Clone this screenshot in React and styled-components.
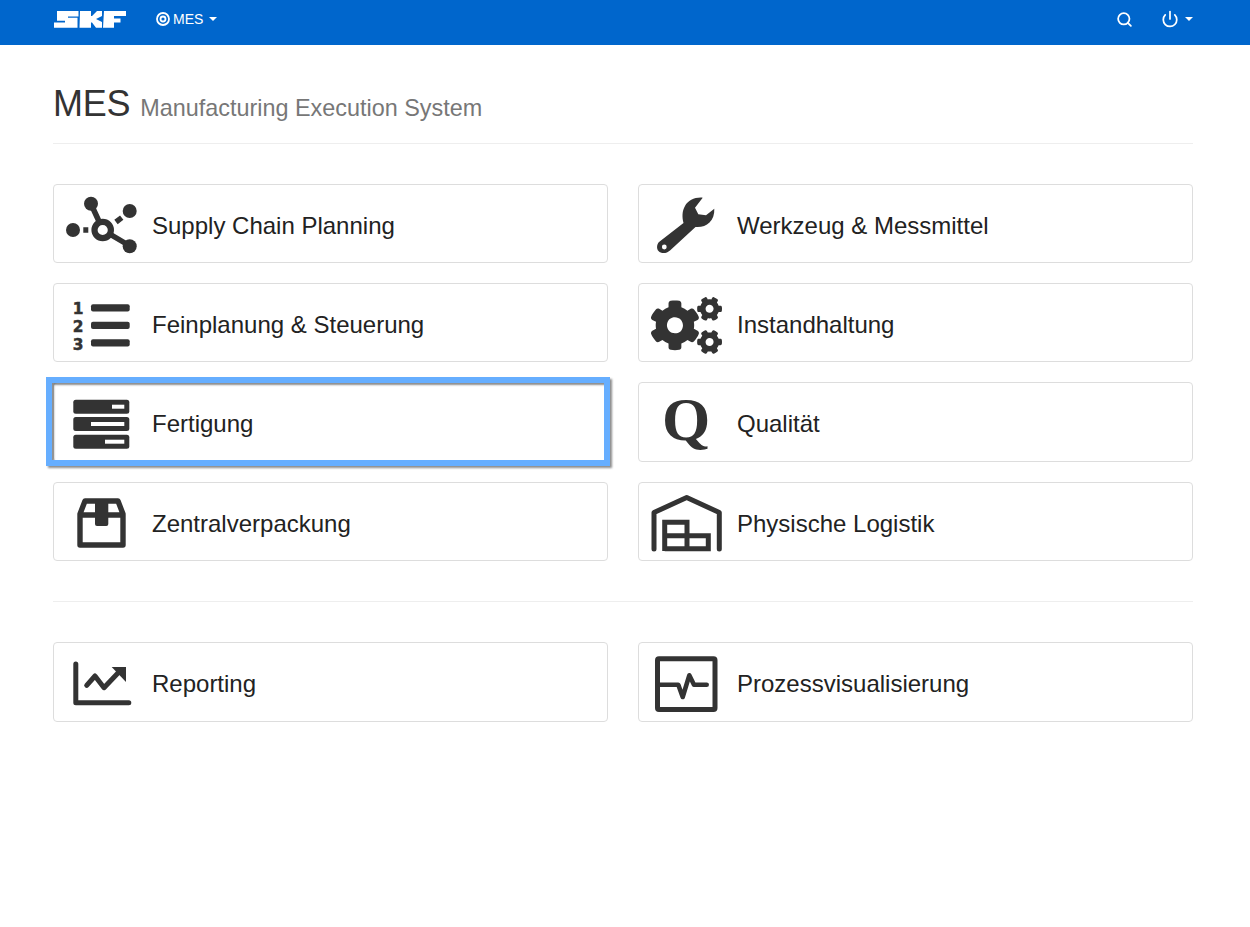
import styled, { createGlobalStyle } from "styled-components";
import { FaCogs } from "react-icons/fa";
import { Power, Search } from "lucide-react";

const GlobalStyle = createGlobalStyle`
  body {
    margin: 0;
    background: #fff;
    font-family: "Liberation Sans", Arial, sans-serif;
    color: #222;
  }
`;

const SkfLogo = () => (
  <svg width="72" height="17" viewBox="0 0 72 17" fill="#fff">
    <path d="M3 0h21.5v5.5H14v1.2h9.5v10H0v-5.2h11V9.8H3z" />
    <path d="M26 0h11v5h1l5-5h5v5l-6 3 6 3v5.7h-6L38 11.5h-1v5.200H25.5z" />
    <path d="M50 0h22v5H60v2.4h6.5v4.2H60v5.1H49z" />
  </svg>
);

const TargetIcon = () => (
  <svg width="14" height="14" viewBox="0 0 14 14" fill="none" stroke="#fff">
    <circle cx="7" cy="7" r="6" strokeWidth="1.8" />
    <circle cx="7" cy="7" r="2.5" strokeWidth="1.8" />
  </svg>
);

const Icon = styled.svg.attrs({ width: 72, height: 72, viewBox: "0 0 72 72" })`
  display: block;
  fill: #333;
  stroke: #333;
  stroke-width: 0;
`;

const NetworkIcon = () => (
  <Icon>
    <g strokeWidth="5.5">
      <path d="M26 17l12 26 27 16M18.3 43h5M51 35l5.7-4.4" fill="none" />
      <circle cx="37.7" cy="43" r="8.2" fill="#fff" strokeWidth="6.2" />
    </g>
    <circle cx="26" cy="16.7" r="7" />
    <circle cx="64.7" cy="24" r="7" />
    <circle cx="64.7" cy="59.3" r="7" />
    <circle cx="8" cy="43" r="7" />
  </Icon>
);

const ListIcon = () => (
  <Icon>
    <rect x="26" y="17.3" width="38.7" height="7.2" rx="2" />
    <rect x="26" y="34.7" width="38.7" height="7.2" rx="2" />
    <rect x="26" y="52.2" width="38.7" height="7.2" rx="2" />
    <g
      fontFamily="'DejaVu Sans', sans-serif"
      fontWeight="700"
      fontSize="15.4"
      textAnchor="middle"
      stroke="#333"
      strokeWidth="0.5"
    >
      <text x="13" y="26.5">1</text>
      <text x="13" y="44.5">2</text>
      <text x="13" y="62.5">3</text>
    </g>
  </Icon>
);

const ServerIcon = () => (
  <Icon>
    <rect x="8.3" y="13.7" width="56" height="14" rx="2.5" />
    <rect x="8.3" y="31" width="56" height="14" rx="2.5" />
    <rect x="8.3" y="48.7" width="56" height="14" rx="2.5" />
    <rect x="47" y="18.7" width="12.3" height="4" fill="#fff" />
    <rect x="26" y="36" width="33.3" height="4" fill="#fff" />
    <rect x="40" y="53.7" width="19.3" height="4" fill="#fff" />
  </Icon>
);

const BoxIcon = () => (
  <Icon>
    <path
      d="M20 16h33L58 29v31H15V29zM15 30h43"
      fill="none"
      strokeWidth="5.4"
      strokeLinejoin="round"
    />
    <rect x="30" y="14" width="13.3" height="27" rx="2" />
  </Icon>
);

const WarehouseIcon = () => (
  <Icon>
    <path
      d="M4 64V27.5l32.7-15 32.6 15V64"
      fill="none"
      strokeWidth="5"
      strokeLinecap="round"
      strokeLinejoin="round"
    />
    <path
      d="M14.7 66V37.3H37v26.4M14.7 50.7h43.6v13H14.7"
      fill="none"
      strokeWidth="5"
    />
  </Icon>
);

const WrenchIcon = () => (
  <Icon>
    <path
      fillRule="evenodd"
      d="M52.7 10.7C45 10 38 13.5 35 19c-3 5-3 11-1.5 17L9 55c-2.5 2.5-2.5 7-.5 9 2.5 2.800 8 2.800 11.5-.5L45.500 40c5.500.5 10.500-1 14-4.500 3.500-3.500 5-8 4.800-13.800L56 28.300l-7.700-1-3.300-6.600zM14.300 57.600a2.400 2.400 0 1 0 0 4.800 2.400 2.400 0 1 0 0-4.800z"
    />
  </Icon>
);

const CogsIcon = styled(FaCogs).attrs({ size: 71, color: "#333" })`
  display: block;
  margin-top: 5px;
`;

const QIcon = () => (
  <Icon>
    <text
      x="36"
      y="54"
      fontFamily="'Liberation Serif', serif"
      fontWeight="700"
      fontSize="62"
      textAnchor="middle"
    >
      Q
    </text>
  </Icon>
);

const ChartIcon = () => (
  <Icon>
    <path
      d="M10.8 18v38.8h53"
      fill="none"
      strokeWidth="5"
      strokeLinecap="round"
      strokeLinejoin="round"
    />
    <path
      d="M21.7 39.3L30 30l9 11.7L53 27"
      fill="none"
      strokeWidth="5"
      strokeLinecap="round"
      strokeLinejoin="round"
    />
    <path d="M46.7 21H61v15z" />
  </Icon>
);

const MonitorIcon = () => (
  <Icon>
    <rect x="7.5" y="12.8" width="57.5" height="50.6" rx="1.5" fill="none" strokeWidth="5" />
    <path
      d="M10 38.7h18.3L32.7 51l6.6-21.7L44 38.7h12.7"
      fill="none"
      strokeWidth="4.6"
      strokeLinecap="round"
      strokeLinejoin="round"
    />
  </Icon>
);

const mainPanels = [
  { label: "Supply Chain Planning", icon: NetworkIcon },
  { label: "Werkzeug & Messmittel", icon: WrenchIcon },
  { label: "Feinplanung & Steuerung", icon: ListIcon },
  { label: "Instandhaltung", icon: CogsIcon },
  { label: "Fertigung", icon: ServerIcon, focused: true },
  { label: "Qualität", icon: QIcon },
  { label: "Zentralverpackung", icon: BoxIcon },
  { label: "Physische Logistik", icon: WarehouseIcon },
];

const otherPanels = [
  { label: "Reporting", icon: ChartIcon },
  { label: "Prozessvisualisierung", icon: MonitorIcon },
];

const PanelGrid = ({ panels }) => (
  <Grid>
    {panels.map((panel) => (
      <Panel key={panel.label} $focused={panel.focused}>
        <IconSlot>
          <panel.icon />
        </IconSlot>
        <PanelLabel>{panel.label}</PanelLabel>
      </Panel>
    ))}
  </Grid>
);

const App = () => (
  <>
    <GlobalStyle />
    <Navbar>
      <NavGroup>
        <SkfLogo />
        <NavItem $gap="30px">
          <TargetIcon />
          MES
          <Caret />
        </NavItem>
      </NavGroup>
      <NavGroup>
        <Search size={17} color="#fff" strokeWidth={2.5} />
        <NavItem $gap="28px">
          <Power size={18} color="#fff" strokeWidth={2.3} />
          <Caret />
        </NavItem>
      </NavGroup>
    </Navbar>
    <Main>
      <PageHeader>
        <Title>
          MES <Subtitle>Manufacturing Execution System</Subtitle>
        </Title>
      </PageHeader>
      <PanelGrid panels={mainPanels} />
      <Divider />
      <PanelGrid panels={otherPanels} />
    </Main>
  </>
);

export default App;

const Navbar = styled.nav`
  box-sizing: border-box;
  height: 45px;
  width: 1250px;
  background: #0066cc;
  padding: 0 57px 7px 54px;
  display: flex;
  align-items: center;
  justify-content: space-between;
`;

const NavGroup = styled.div`
  display: flex;
  align-items: center;
`;

const NavItem = styled.div`
  display: flex;
  align-items: center;
  gap: 3px;
  margin-left: ${(props) => props.$gap};
  color: #fff;
  font-size: 14px;
`;

const Caret = styled.span`
  width: 0;
  height: 0;
  margin-left: 3px;
  border-top: 4px solid #fff;
  border-left: 4px solid transparent;
  border-right: 4px solid transparent;
`;

const Main = styled.main`
  width: 1140px;
  margin-left: 53px;
`;

const PageHeader = styled.header`
  margin-top: 39px;
  padding-bottom: 19px;
  border-bottom: 1px solid #eee;
  margin-bottom: 40px;
`;

const Title = styled.h1`
  margin: 0;
  font-size: 36px;
  font-weight: 500;
  line-height: 1.1;
  color: #333;
  letter-spacing: -0.2px;
`;

const Subtitle = styled.small`
  font-size: 23.4px;
  font-weight: 400;
  color: #777;
  letter-spacing: 0;
`;

const Grid = styled.div`
  display: grid;
  grid-template-columns: 555px 555px;
  gap: 20px 30px;
`;

const Panel = styled.div`
  position: relative;
  box-sizing: border-box;
  height: 79.33px;
  padding-left: 11px;
  display: flex;
  align-items: center;
  gap: 15px;
  border: 1px solid #ddd;
  border-radius: 4px;
  background: #fff;

  ${(props) =>
    props.$focused &&
    `
    &::after {
      content: "";
      position: absolute;
      top: -6px;
      left: -8px;
      right: -3px;
      bottom: -5px;
      border: 6px solid #66aeff;
      box-shadow: 2px 2px 2px rgba(0, 0, 0, 0.45),
        inset 2px 2px 2px rgba(0, 0, 0, 0.45);
    }
  `}
`;

const IconSlot = styled.div`
  width: 72px;
  height: 72px;
  flex: none;
  display: flex;
  align-items: center;
  justify-content: center;
`;

const PanelLabel = styled.span`
  margin-top: 5px;
  font-size: 24px;
  color: #222;
`;

const Divider = styled.hr`
  margin: 40px 0 40.3px;
  border: 0;
  border-top: 1px solid #eee;
`;
